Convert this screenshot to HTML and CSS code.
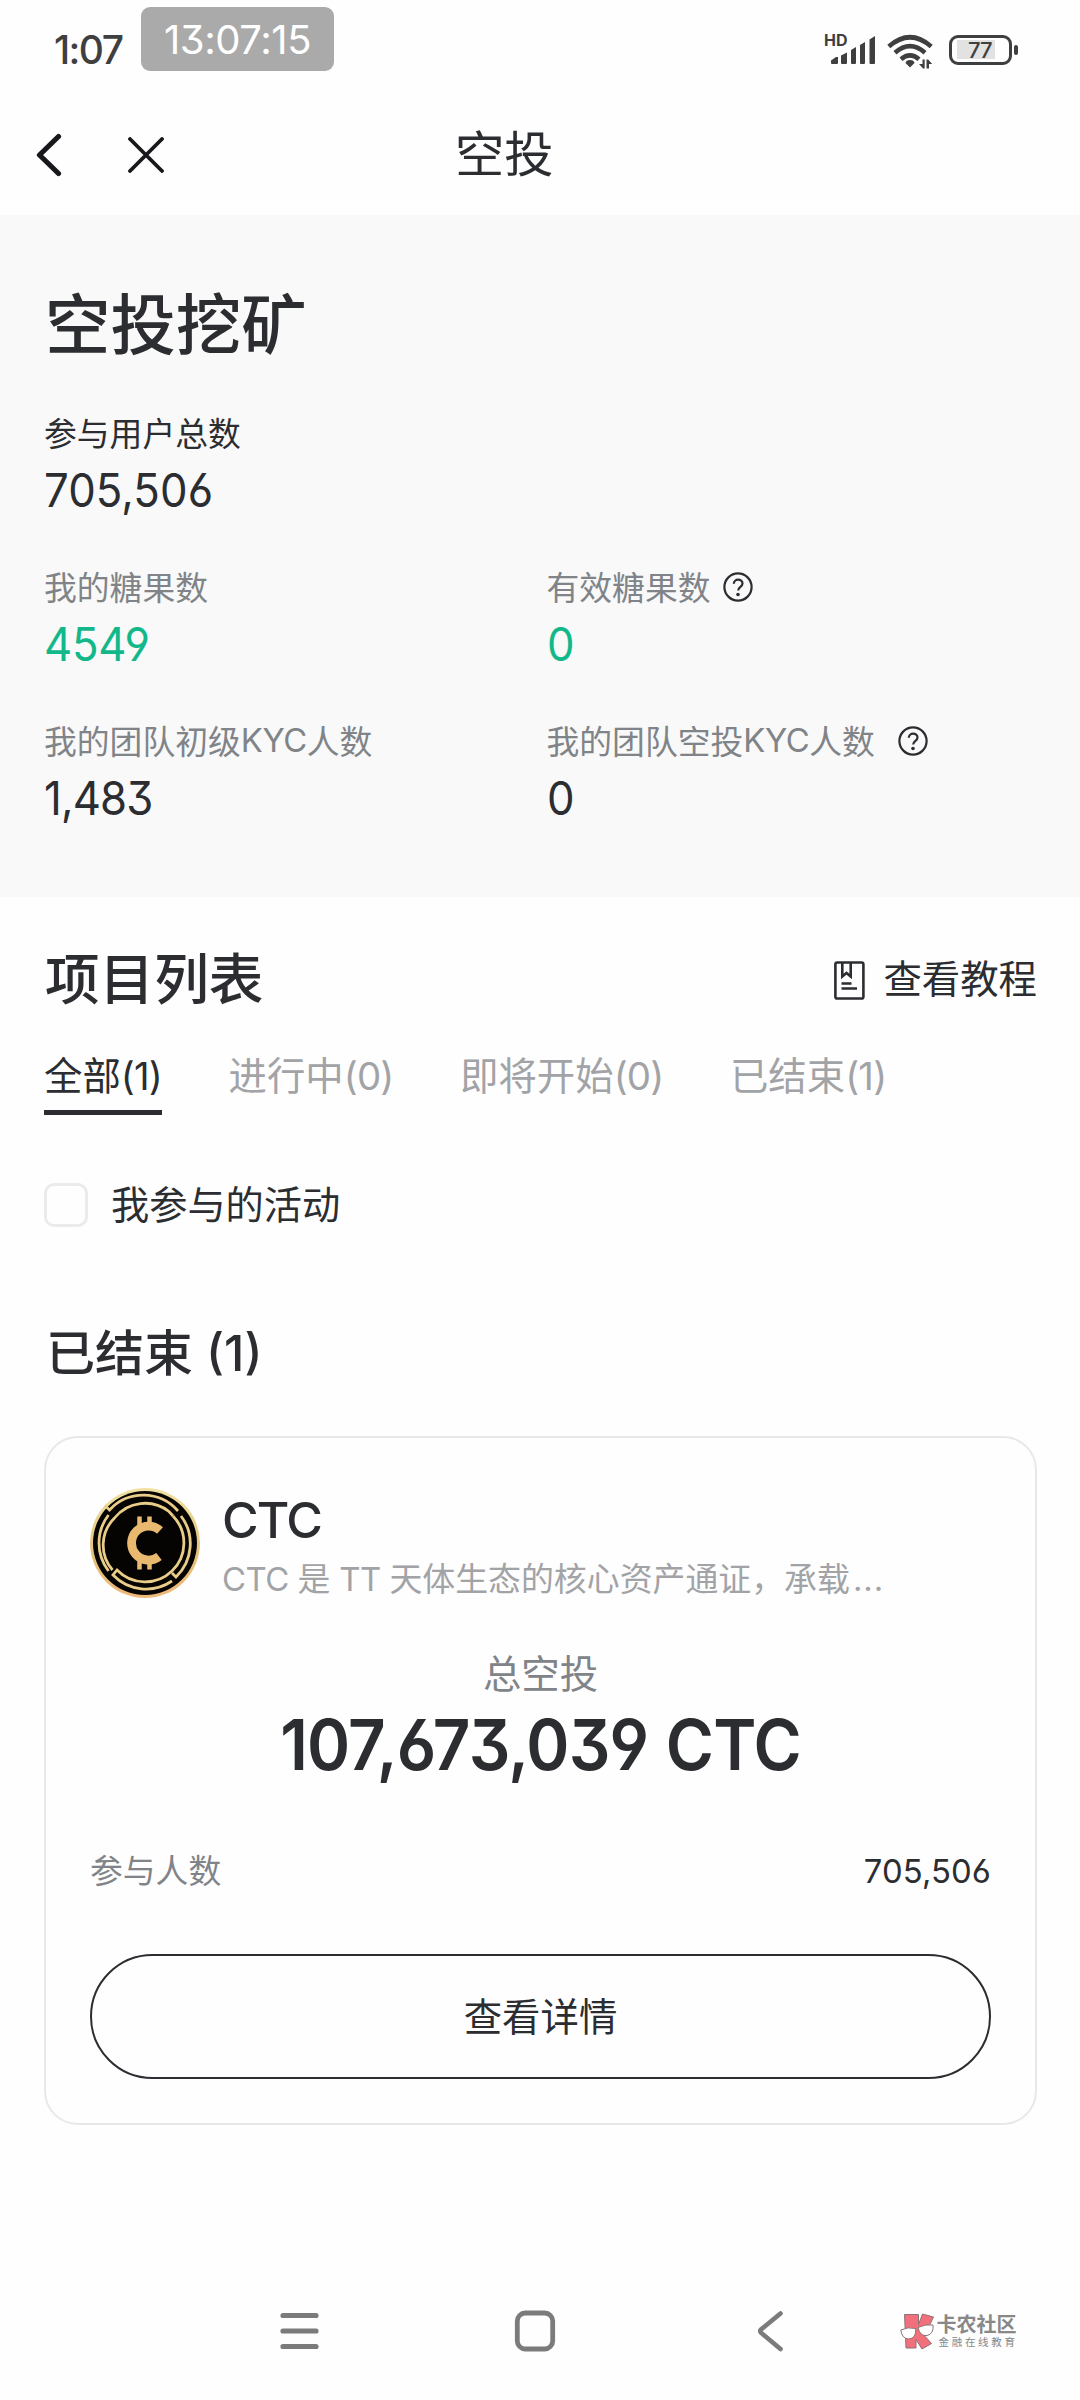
FILE: index.html
```html
<!DOCTYPE html>
<html lang="zh-CN">
<head>
<meta charset="utf-8">
<title>空投</title>
<link rel="stylesheet" href="styles.css">
</head>
<body>
<header class="status">
  <span class="clock">1:07</span>
  <span class="stamp">13:07:15</span>
  <div class="network">
    <span class="hd">HD</span>
    <svg width="46" height="29" viewBox="5 3 46 29" fill="#3f3f3f">
      <path d="M6 30.500v-2l5-3.500h2v6q0 1-1 1h-5q-1 0-1-1zM16 23.500l6-3v10.500q0 1-1 1h-4q-1 0-1-1zM26 18l5-3v16q0 1-1 1h-3q-1 0-1-1zM35 13l5-3v21q0 1-1 1h-3q-1 0-1-1zM44.500 7.500l5.500-3.500v27q0 1-1 1h-3.500q-1 0-1-1z"/>
    </svg>
  </div>
  <svg class="wifi" width="46" height="36" viewBox="0 0 46 36" fill="none" stroke="#3f3f3f" stroke-width="4.600">
    <path d="M1.800 12.500Q23-6 44.200 12.500M8 18.800Q23 5.500 38 18.800M14 25.200Q23 17.500 32 25.200"/>
    <path d="M23 26q4 0 4.500 3L23 33.500 18.500 29q.5-3 4.500-3z" fill="#3f3f3f" stroke="none"/>
    <path d="M35.500 25.500h2.200v9h-1.700l-4-4.500h3.500zM39.500 34.500v-9h1.700l4 4.500h-3.200v4.500z" fill="#3f3f3f" stroke="none"/>
  </svg>
  <span class="battery"><span class="level">77</span></span>
  <span class="nub"></span>
</header>

<nav class="topbar">
  <svg class="back" width="28" height="44" viewBox="0 0 28 44"><path d="M23.500 3.500 4.500 22 23.500 40.500" fill="none" stroke="#17181b" stroke-width="5.200" stroke-linecap="round" stroke-linejoin="round"/></svg>
  <svg class="close" width="36" height="36" viewBox="0 0 36 36"><path d="M2 2l32 32M34 2L2 34" stroke="#17181b" stroke-width="3.800" stroke-linecap="round"/></svg>
  <span class="title">空投</span>
</nav>

<section class="hero">
  <h1>空投挖矿</h1>
  <div class="stat dark"><div class="label">参与用户总数</div><div class="value">705,506</div></div>
  <div class="stats">
    <div class="stat"><div class="label">我的糖果数</div><div class="value green">4549</div></div>
    <div class="stat"><div class="label">有效糖果数
      <svg class="help" width="30" height="30" viewBox="0 0 30 30"><circle cx="15" cy="15" r="13.600"/><path d="M10.800 11.800c0-5.500 8.700-5.300 8.700-.3 0 3.300-4.300 3.400-4.300 7"/><circle class="dot" cx="15" cy="22.500" r="1.800"/></svg></div>
      <div class="value green">0</div></div>
    <div class="stat"><div class="label">我的团队初级<span class="kyc">KYC</span>人数</div><div class="value tight">1,483</div></div>
    <div class="stat"><div class="label">我的团队空投<span class="kyc">KYC</span>人数
      <svg class="help far" width="30" height="30" viewBox="0 0 30 30"><circle cx="15" cy="15" r="13.600"/><path d="M10.800 11.800c0-5.500 8.700-5.300 8.700-.3 0 3.300-4.300 3.400-4.300 7"/><circle class="dot" cx="15" cy="22.500" r="1.800"/></svg></div>
      <div class="value">0</div></div>
  </div>
</section>

<main class="projects">
  <div class="head">
    <h2>项目列表</h2>
    <a class="guide">
      <svg width="31" height="39" viewBox="0 0 31 39" fill="none" stroke="#2b2d31" stroke-width="2.600"><rect x="1.400" y="1.500" width="28" height="36" rx="1.800"/><path d="M8.300 2v13.500l4.200-3.500 4.200 3.500V2M7.500 22.500h10M7.500 27.500h15.500"/></svg>
      查看教程</a>
  </div>
  <div class="tabs">
    <span class="tab active">全部<span class="num">(1)</span></span>
    <span class="tab">进行中<span class="num">(0)</span></span>
    <span class="tab">即将开始<span class="num">(0)</span></span>
    <span class="tab">已结束<span class="num">(1)</span></span>
  </div>
  <label class="filter"><span class="box"></span><span class="filter-text">我参与的活动</span></label>
  <h3>已结束 <span class="num">(1)</span></h3>

  <article class="card">
    <div class="token">
      <svg class="coin" width="110" height="110" viewBox="0 0 110 110">
        <defs><linearGradient id="gold" x1="0" y1="0" x2="0" y2="1"><stop offset="0" stop-color="#f0e2a4"/><stop offset=".6" stop-color="#e3c27c"/><stop offset="1" stop-color="#eeb878"/></linearGradient></defs>
        <circle cx="55" cy="55" r="55" fill="url(#gold)"/>
        <circle cx="55" cy="55" r="52" fill="#050402"/>
        <g fill="none" stroke="#e8cc88" stroke-width="2.800">
          <path d="M15 17.500l4.500 4.500A46 46 0 0 1 88 23"/>
          <path d="M22.500 82A38 38 0 0 1 24.500 30A39 39 0 0 1 79 23.500L83 28"/>
          <path d="M18.500 27A46 46 0 0 0 18.500 83"/>
          <path d="M91 28A46 46 0 0 1 86 89l-4-4"/>
          <path d="M83 28A38.500 38.500 0 0 1 27 82l-4 5A46 46 0 0 0 82 93"/>
        </g>
        <g fill="none" stroke="#e9b970">
          <path d="M70 42.500A17 17 0 1 0 69 68.500" stroke-width="8.800"/>
          <path d="M49.500 28.500v9M59.500 28.500v9M49.500 72.500v9M59.500 72.500v9" stroke-width="4.500"/>
        </g>
      </svg>
      <div class="info">
        <div class="symbol">CTC</div>
        <div class="desc"><span class="latin">CTC </span>是<span class="latin"> TT </span>天体生态的核心资产通证，承载<span class="dots">...</span></div>
      </div>
    </div>
    <div class="total-label">总空投</div>
    <div class="total">107,673,039 CTC</div>
    <div class="row"><span>参与人数</span><span class="count">705,506</span></div>
    <button class="detail" type="button">查看详情</button>
  </article>
</main>

<footer class="sysnav">
  <svg class="menu" width="40" height="44" viewBox="0 0 40 44"><path d="M3 6.500h33M3 22h33M3 37.500h33" stroke="#7b7b7b" stroke-width="5.200" stroke-linecap="round"/></svg>
  <svg class="home" width="42" height="44" viewBox="0 0 42 44"><rect x="3.300" y="4" width="35.400" height="36" rx="8" fill="none" stroke="#7b7b7b" stroke-width="4.800"/></svg>
  <svg class="prev" width="28" height="44" viewBox="0 0 28 44"><path d="M24.500 4.500 5 20.500q-1.500 1.500 0 3.200L24.500 40" fill="none" stroke="#7b7b7b" stroke-width="4.600" stroke-linecap="round"/></svg>
  <div class="brand">
    <svg width="35" height="37" viewBox="0 0 35 37" stroke="#8d7376" stroke-width="1">
      <path d="M4.500 1.500h14v10l4-10.500L33.500 4 28 15.500l-6 4.500L31.500 30.500 22 36l-6-9.500V35H6z" fill="#f2707c"/>
      <path d="M.8 17q7-3.500 15-1.500.5 10-7 10.500Q2 26 .8 17zM18 14.500q7-3.500 15-2.500 1 9-6 10.500-7 1-9-8z" fill="#fff"/>
    </svg>
    <div class="brand-text"><div class="brand-name">卡农社区</div><div class="brand-sub">金融在线教育</div></div>
  </div>
</footer>
</body>
</html>
```

FILE: styles.css
```css
* { box-sizing: border-box; }
body {
  margin: 0;
  width: 1080px;
  height: 2400px;
  overflow: hidden;
  background: #fefefe;
  color: #2b2d31;
  font-family: "Noto Sans CJK SC", sans-serif;
  font-size: 38.4px;
}
svg { display: block; flex: none; }
h1, h2, h3 { margin: 0; font-weight: 500; white-space: nowrap; }

.status { display: flex; align-items: flex-start; height: 97px; font-family: Inter, sans-serif; color: #3f3f3f; }
.clock { width: 87px; margin: 25px 0 0 54px; font-size: 39px; font-weight: 500; line-height: 50px; letter-spacing: -1.6px; }
.stamp {
  width: 193px; height: 64px; margin-top: 7px; border-radius: 9px;
  background: #aaa; color: #fff; text-align: center;
  font-size: 40px; line-height: 65px; letter-spacing: -.4px;
  font-feature-settings: "cv09";
}
.network { position: relative; width: 51px; margin: 35px 0 0 491px; padding-left: 5px; }
.hd { position: absolute; left: -1px; top: -5px; font-size: 16px; font-weight: 700; line-height: 20px; }
.wifi { margin: 34px 0 0 11px; }
.battery { width: 63px; height: 30px; margin: 35px 0 0 16px; padding: 2px 5px; border: 3.5px solid #3f3f3f; border-radius: 9px; }
.level { display: block; width: 38px; height: 19px; background: #e2e2e2; font-size: 22px; font-weight: 500; line-height: 20px; padding-left: 11px; letter-spacing: -1px; }
.nub { width: 4px; height: 10px; margin: 45px 0 0 2px; border-radius: 2px; background: #3f3f3f; }

.topbar { display: flex; align-items: center; height: 118px; padding-bottom: 2px; }
.back { margin-left: 35px; }
.close { margin-left: 65px; }
.title { margin: -8px 0 0 291px; font-size: 49.3px; line-height: 60px; }

.hero { height: 682px; padding: 66px 44px 0; background: #f9f9f9; }
h1 { font-size: 65.4px; line-height: 80px; margin: 0 0 51px 1px; }
.stats { display: grid; grid-template-columns: 502.5px 1fr; row-gap: 46px; margin-top: 46px; }
.label { display: flex; align-items: center; height: 40px; font-size: 32.8px; line-height: 40px; white-space: nowrap; color: #808488; }
.dark .label { color: #2b2d31; }
.value {
  width: fit-content; margin-top: 8px; transform: scaleX(.93); transform-origin: 0 50%;
  font-family: Inter, sans-serif; font-size: 47px; line-height: 60px; letter-spacing: .1px;
  font-feature-settings: "cv09", "cv03", "cv04";
}
.tight { letter-spacing: -.9px; }
.green { color: #13b88a; letter-spacing: -.3px; }
.kyc { font-family: Inter, sans-serif; letter-spacing: -.4px; }
.help { margin: 1px 0 0 13px; fill: none; stroke: #2b2d31; stroke-width: 2.2; }
.help .dot { fill: #2b2d31; stroke: none; }
.far { margin-left: 23px; }

.projects { padding: 49px 43px 0 44px; }
.head { display: flex; justify-content: space-between; align-items: center; height: 60px; }
h2 { margin-left: 1px; font-size: 54.6px; line-height: 60px; }
.guide { display: flex; align-items: center; gap: 18px; line-height: 60px; }
.guide svg { margin-top: 8px; }
.tabs { display: flex; gap: 66.5px; margin-top: 45px; }
.tab { height: 64px; line-height: 44px; white-space: nowrap; color: #a2a3a6; }
.num { font-family: Inter, sans-serif; letter-spacing: -.8px; }
.active { color: #2b2d31; border-bottom: 5px solid #2b2d31; }
.filter { display: flex; gap: 23px; height: 44px; margin-top: 68px; }
.box { width: 44px; height: 44px; border: 3.5px solid #ebebeb; border-radius: 10px; }
.filter-text { line-height: 40px; font-size: 38.2px; }
h3 { height: 60px; margin: 93px 0 0 2px; font-size: 49px; line-height: 60px; }
h3 .num { letter-spacing: 0; margin-left: 2px; }

.card { height: 689px; margin-top: 56px; padding: 50px 44px 0; border: 2px solid #e8e8e8; border-radius: 34px; }
.token { display: flex; gap: 22px; height: 110px; }
.info { padding-top: 7px; }
.symbol { font-family: Inter, sans-serif; font-size: 50px; font-weight: 500; line-height: 50px; letter-spacing: -1.8px; }
.desc { margin-top: 12px; font-size: 32.9px; line-height: 40px; color: #a2a3a6; white-space: nowrap; }
.latin { font-family: Inter, sans-serif; letter-spacing: -.5px; white-space: pre; }
.dots { margin-left: 3px; font-family: Inter, sans-serif; letter-spacing: 1px; }
.total-label { margin-top: 51px; line-height: 44px; text-align: center; color: #808488; }
.total {
  margin-top: 12px; transform: scaleX(.935); font-family: Inter, sans-serif;
  font-size: 70px; font-weight: 600; line-height: 80px; text-align: center;
  letter-spacing: -.9px; word-spacing: 2px; white-space: nowrap;
  font-feature-settings: "cv09", "cv03", "cv04";
}
.row { display: flex; justify-content: space-between; margin-top: 64px; font-size: 32.8px; line-height: 40px; color: #808488; }
.count { font-family: Inter, sans-serif; line-height: 44px; height: 40px; color: #2b2d31; letter-spacing: .1px; font-feature-settings: "cv09", "cv03", "cv04"; }
.detail { display: block; width: 901px; height: 125px; margin-top: 65px; padding: 0 0 5px; border: 2px solid #2b2d31; border-radius: 63px; background: none; color: inherit; font: inherit; }

.sysnav { display: flex; align-items: center; height: 100px; margin-top: 156px; }
.menu { margin-left: 279.5px; }
.home { margin-left: 194px; }
.prev { margin-left: 200px; }
.brand { display: flex; gap: 2px; margin-left: 116px; color: #888; }
.brand-name { font-size: 20px; line-height: 21px; font-weight: 700; white-space: nowrap; }
.brand-sub { margin-top: 1px; padding-left: 2px; font-size: 10.5px; line-height: 14px; letter-spacing: 2.7px; white-space: nowrap; }
```
